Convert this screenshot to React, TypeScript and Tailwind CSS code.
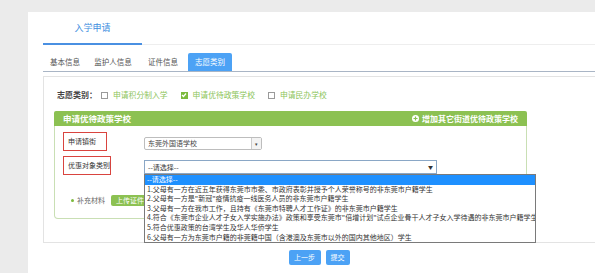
import React from 'react';

const options = [
  '1.父母有一方在近五年获得东莞市市委、市政府表彰并授予个人荣誉称号的非东莞市户籍学生',
  '2.父母有一方是"新冠"疫情抗疫一线医务人员的非东莞市户籍学生',
  '3.父母有一方在我市工作，且持有《东莞市特聘人才工作证》的非东莞市户籍学生',
  '4.符合《东莞市企业人才子女入学实施办法》政策和享受东莞市"倍增计划"试点企业骨干人才子女入学待遇的非东莞市户籍学生',
  '5.符合优惠政策的台湾学生及华人华侨学生',
  '6.父母有一方为东莞市户籍的非莞籍中国（含港澳及东莞市以外的国内其他地区）学生',
];

const tabs = [
  { label: '基本信息', w: 'w-[44px]' },
  { label: '监护人信息', w: 'w-[52px]' },
  { label: '证件信息', w: 'w-[48px]' },
];

const Check = ({ checked, label }: { checked?: boolean; label: string }) => (
  <div className="flex items-center mr-[13px]">
    {checked ? (
      <span className="w-[7px] h-[7px] bg-[#7cba3d] flex items-center justify-center mr-[5px]">
        <svg width="6" height="6" viewBox="0 0 6 6">
          <path d="M1 3 L2.5 4.5 L5 1.5" stroke="white" strokeWidth="1.2" fill="none" />
        </svg>
      </span>
    ) : (
      <span className="w-[7px] h-[7px] border border-[#9a9a9a] bg-white mr-[5px]" />
    )}
    <span className="text-[7.8px] text-[#8cc45a]">{label}</span>
  </div>
);

export default function App() {
  return (
    <div
      className="w-[600px] h-[273px] bg-white overflow-hidden"
      style={{ fontFamily: '"Noto Sans CJK SC", "Noto Sans", sans-serif' }}
    >
      <div className="w-[595px] h-full bg-[#ebebeb] pl-[28px] pt-[12px]">
        <div className="bg-white h-full pl-[15px]">
          {/* Title tab */}
          <div className="h-[33px] border-b border-[#eeeeee] flex">
            <div className="w-[99px] h-[33px] border-b-2 border-[#4a90e2] flex items-center justify-center text-[9px] text-[#3d8ee0] pt-[1px]">
              入学申请
            </div>
          </div>

          {/* Sub tabs */}
          <div className="mt-[8px] h-[19px] border-b border-[#a9b5c5] flex text-[7.5px] text-[#555]">
            {tabs.map((t) => (
              <div key={t.label} className={`${t.w} flex items-center justify-center`}>
                {t.label}
              </div>
            ))}
            <div className="w-[44px] ml-[1px] bg-[#4ca2f5] rounded-t-[2px] flex items-center justify-center text-white">
              志愿类别
            </div>
          </div>

          {/* Content box */}
          <div className="mt-[4px] w-[552px] h-[167px] border-t border-l border-b border-[#e3e3e3]">
            <div className="mt-[11px] h-[14px] pl-[13px] flex items-center">
              <span className="text-[8px] font-bold text-[#444] mr-[4px]">志愿类别：</span>
              <Check label="申请积分制入学" />
              <Check checked label="申请优待政策学校" />
              <Check label="申请民办学校" />
            </div>

            {/* Green panel */}
            <div className="mt-[9px] ml-[10px] w-[473px] h-[108px] flex flex-col">
              <div className="h-[15px] bg-[#8cc152] rounded-t-[2px] flex items-center justify-between px-[9px] text-white">
                <span className="text-[8.5px] font-bold">申请优待政策学校</span>
                <span className="flex items-center text-[8px] font-bold">
                  <span className="w-[7px] h-[7px] rounded-full bg-white flex items-center justify-center mr-[3px]">
                    <svg width="5" height="5" viewBox="0 0 5 5">
                      <path d="M2.5 0.5 V4.5 M0.5 2.5 H4.5" stroke="#8cc152" strokeWidth="1.2" />
                    </svg>
                  </span>
                  增加其它街道优待政策学校
                </span>
              </div>
              <div className="flex-1 border border-t-0 border-[#c9dfb4] rounded-b-[4px] relative">
                {/* Row 1 */}
                <div className="mt-[6px] flex">
                  <div className="w-[89px] pl-[8px]">
                    <div className="w-[44px] h-[19px] border-[1.5px] border-[#d9443f] flex items-center pl-[4px] text-[7px] text-[#333]">
                      申请镇街
                    </div>
                  </div>
                  <div className="mt-[5px] w-[118px] h-[13px] border border-[#bdbdbd] rounded-[2px] bg-white flex items-center justify-between pl-[3px] text-[7px] text-[#444]">
                    <span>东莞外国语学校</span>
                    <span className="h-full w-[10px] border-l border-[#ccc] bg-[#f3f3f3] flex items-center justify-center text-[5px]">▾</span>
                  </div>
                </div>

                {/* Row 2 */}
                <div className="mt-[5px] flex">
                  <div className="w-[89px] pl-[8px]">
                    <div className="w-[48px] h-[19px] border-[1.5px] border-[#d9443f] flex items-center pl-[4px] text-[7px] text-[#333]">
                      优惠对象类别
                    </div>
                  </div>
                  <div className="relative mt-[4px]">
                    <div className="w-[293px] h-[14px] border border-[#8aa7c6] bg-white flex items-center justify-between px-[3px] text-[7px] text-[#333]">
                      <span>--请选择--</span>
                      <span className="text-[5px]">▼</span>
                    </div>
                    {/* Dropdown list */}
                    <div className="absolute left-0 top-[14px] w-[392px] h-[69px] bg-white border border-[#7a7a7a] z-10 text-[7px] text-[#333] leading-[9.6px] whitespace-nowrap overflow-hidden">
                      <div className="bg-[#1e90ff] text-white pl-[2px] h-[9.6px]">--请选择--</div>
                      {options.map((o) => (
                        <div key={o} className="pl-[2px] h-[9.6px]">
                          {o}
                        </div>
                      ))}
                    </div>
                  </div>
                </div>

                {/* Supplementary */}
                <div className="mt-[19px] h-[12px] flex items-center pl-[16px]">
                  <span className="w-[3px] h-[3px] rounded-full bg-[#7cba3d] mr-[3px]" />
                  <span className="text-[7px] text-[#666] mr-[6px]">补充材料</span>
                  <span className="h-[11px] px-[5px] bg-[#8cc152] rounded-[2px] text-white text-[7px] flex items-center">
                    上传证件
                  </span>
                </div>
              </div>
            </div>
          </div>

          {/* Buttons */}
          <div className="w-[552px] mt-[7px] flex justify-center gap-[5px]">
            <div className="w-[32px] h-[15px] bg-[#4ca2f5] rounded-[2px] text-white text-[7px] flex items-center justify-center">
              上一步
            </div>
            <div className="w-[24px] h-[15px] bg-[#4ca2f5] rounded-[2px] text-white text-[7px] flex items-center justify-center">
              提交
            </div>
          </div>
        </div>
      </div>
    </div>
  );
}
